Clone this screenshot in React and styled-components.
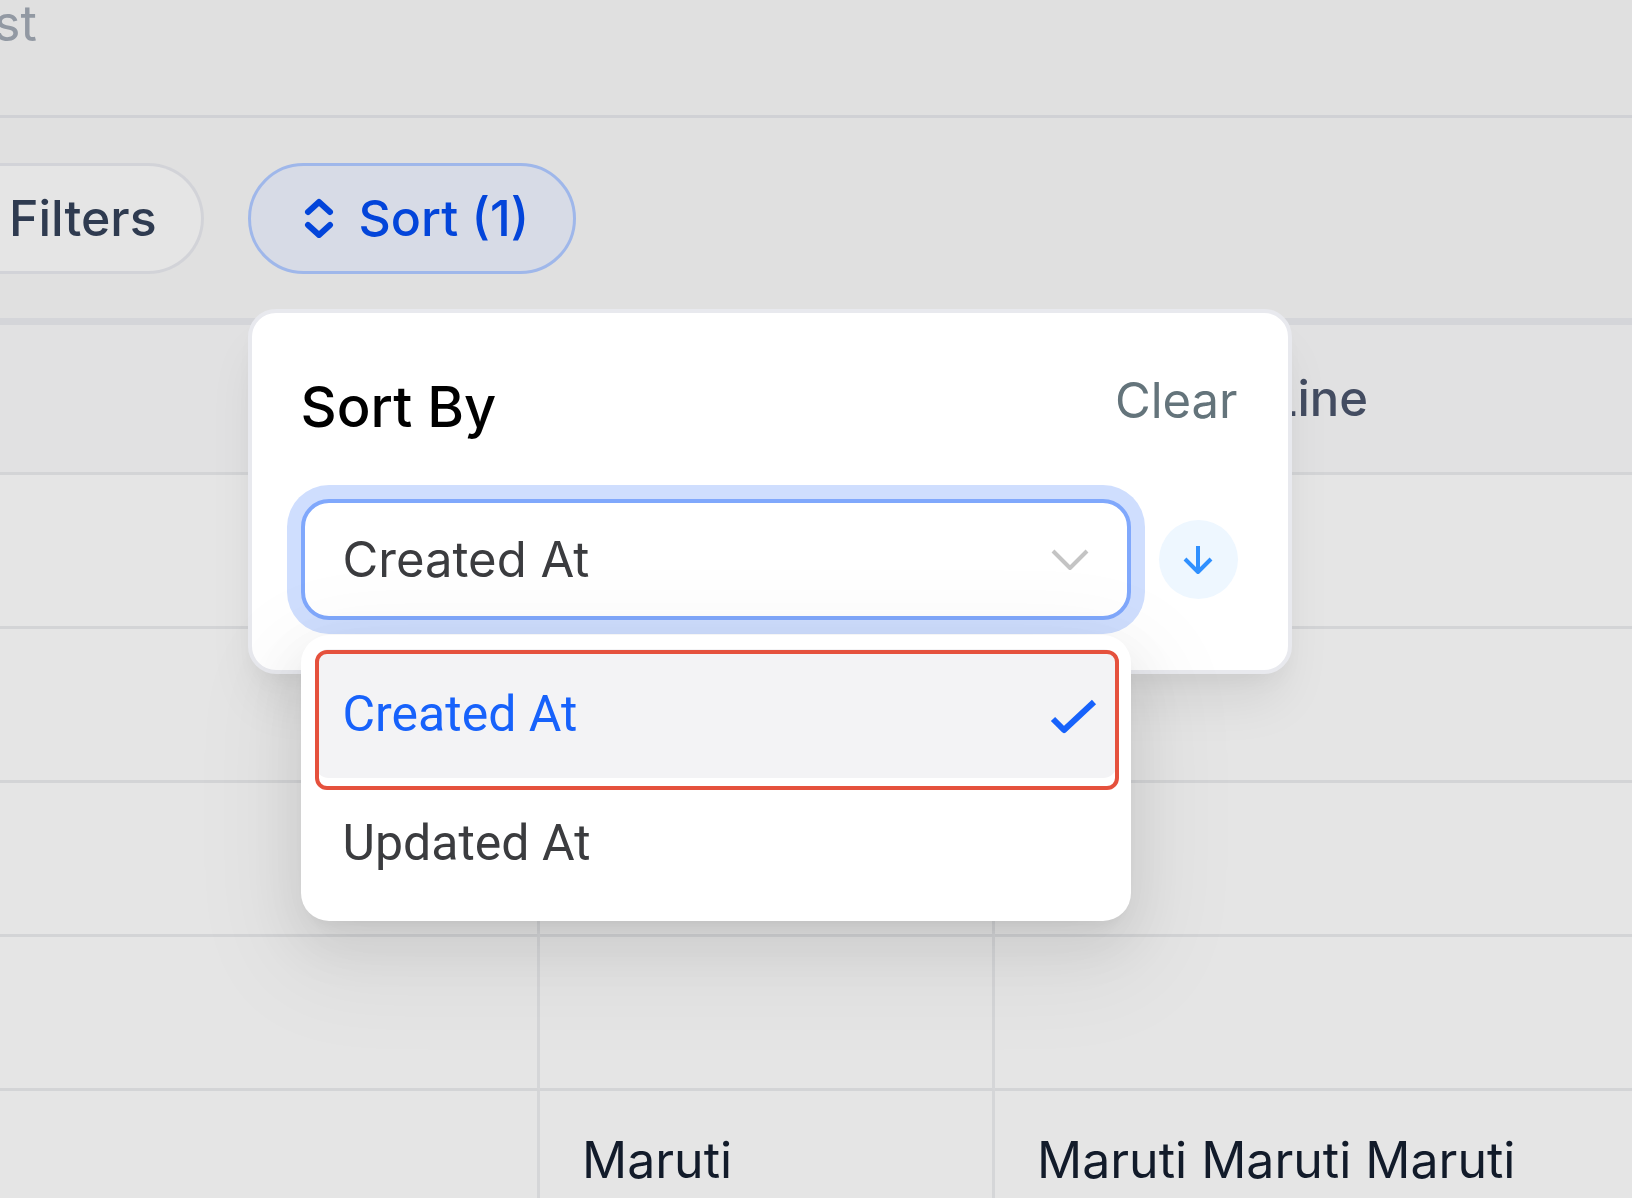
import React, { useState } from "react";
import styled, { createGlobalStyle, css } from "styled-components";

const GlobalStyle = createGlobalStyle`
  *, *::before, *::after { box-sizing: border-box; }
  body {
    margin: 0;
    background: #e0e0e0;
    font-family: Inter, "Liberation Sans", sans-serif;
    font-size: 50px;
    line-height: 70px;
  }
  button, select { font: inherit; }
`;

const Page = styled.div`
  display: flex;
  flex-direction: column;
  height: 100vh;
  overflow: hidden;
`;

const TopBar = styled.header`
  height: 118px;
  flex: none;
  border-bottom: 3px solid #d0d1d5;
  color: #9299a3;
`;

const TopText = styled.p`
  margin: -12px 0 0 -6px;
`;

const Toolbar = styled.div`
  display: flex;
  flex: none;
  gap: 44px;
  padding: 45px 0 44px;
  border-bottom: 7px solid #d4d5d9;
`;

const PillButton = styled.button`
  display: flex;
  align-items: center;
  height: 111px;
  border: 3px solid #d2d3d8;
  border-radius: 56px;
  padding: 0 44px 2px 48px;
  background: #e5e5e5;
  color: #2f3b50;
  font-weight: 500;
  white-space: nowrap;
  ${(p) =>
    p.$clipped &&
    css`
      border-left: 0;
      border-radius: 0 56px 56px 0;
      padding: 0 44px 2px 9px;
    `}
  ${(p) =>
    p.$active &&
    css`
      gap: 20px;
      border-color: #9fb7ea;
      background: #d7dbe6;
      color: #0345da;
    `}
`;

const SortAnchor = styled.div`
  position: relative;
`;

const Popover = styled.section`
  position: absolute;
  top: 146px;
  left: 0;
  z-index: 2;
  width: 1044px;
  height: 365px;
  padding: 49px 50px 0 49px;
  border: 4px solid #e8e9ee;
  border-radius: 28px;
  background: #fff;
  font-size: 49px;
  box-shadow: 0 35px 52px -10px rgba(0, 0, 0, 0.08), 0 14px 21px -7px rgba(0, 0, 0, 0.04);
`;

const PopoverHead = styled.div`
  display: flex;
  justify-content: space-between;
  align-items: flex-start;
  height: 137px;
`;

const Title = styled.h2`
  margin: 0;
  padding-top: 10px;
  color: #000;
  font-size: 56px;
  font-weight: 500;
`;

const ClearButton = styled.button`
  border: 0;
  padding: 4px 0 0;
  background: none;
  color: #64747b;
`;

const FieldRow = styled.div`
  display: flex;
  align-items: center;
  gap: 28px;
`;

const Field = styled.div`
  position: relative;
  flex: 1;
  display: flex;
  align-items: center;
`;

const Select = styled.select`
  appearance: none;
  width: 100%;
  height: 121px;
  margin: 0;
  padding: 0 96px 0 38px;
  border: 4px solid #80a8fc;
  border-radius: 28px;
  outline: none;
  background: #fff;
  box-shadow: 0 0 0 14px #cfdefe;
  color: #3b3c3f;
`;

const FieldIcon = styled.span`
  position: absolute;
  right: 41px;
  display: flex;
  pointer-events: none;
`;

const DirectionButton = styled.button`
  display: flex;
  align-items: center;
  justify-content: center;
  flex: none;
  width: 79px;
  height: 79px;
  border: 0;
  border-radius: 50%;
  padding: 0;
  background: #eef7ff;
`;

const Menu = styled.ul`
  position: absolute;
  top: 136px;
  left: 0;
  right: 0;
  z-index: 3;
  margin: 0;
  padding: 14px;
  list-style: none;
  border-radius: 28px;
  background: #fff;
  box-shadow: 0 21px 56px rgba(0, 0, 0, 0.08), 0 10px 21px -14px rgba(0, 0, 0, 0.12),
    0 32px 98px 28px rgba(0, 0, 0, 0.05);
`;

const MenuItem = styled.li`
  position: relative;
`;

const OptionButton = styled.button`
  display: flex;
  align-items: center;
  justify-content: space-between;
  width: 100%;
  height: 129px;
  border: 0;
  border-radius: 14px;
  padding: 0 20px 0 28px;
  background: ${(p) => (p.$selected ? "#f3f3f5" : "transparent")};
  color: ${(p) => (p.$selected ? "#1762fb" : "#3b3c3f")};
  font-family: Roboto, "Liberation Sans", sans-serif;
  font-size: 50px;
`;

const Highlight = styled.span`
  position: absolute;
  inset: 1px -2px -12px 0;
  border: 4px solid #e5513d;
  border-radius: 12px;
  pointer-events: none;
`;

const Table = styled.table`
  width: 100%;
  table-layout: fixed;
  border-collapse: separate;
  border-spacing: 0;
`;

const cell = css`
  border-right: 3px solid #d5d6d8;
  border-bottom: 3px solid #d3d4d6;
  padding: 0 42px;
  text-align: left;
  white-space: nowrap;
  &:last-child { border-right: 0; }
`;

const HeadCell = styled.th`
  ${cell}
  height: 150px;
  background: #e1e1e2;
  color: #434c61;
  font-size: 49px;
  font-weight: 500;
`;

const HeadLabel = styled.span`
  display: block;
  width: 331px;
  text-align: right;
`;

const Cell = styled.td`
  ${cell}
  height: 154px;
  padding-top: 34px;
  vertical-align: top;
  background: #e5e5e5;
  color: #121b2a;
`;

const Icon = ({ width, height, stroke, color, points, cap = "butt" }) => (
  <svg width={width} height={height} viewBox={`0 0 ${width} ${height}`} fill="none" aria-hidden="true">
    {points.map((p) => (
      <polyline key={p} points={p} stroke={color} strokeWidth={stroke} strokeLinecap={cap} strokeLinejoin="round" />
    ))}
  </svg>
);

const rows = [
  ["", "", ""],
  ["", "", ""],
  ["", "", ""],
  ["", "", ""],
  ["", "Maruti", "Maruti Maruti Maruti"],
];

const options = ["Created At", "Updated At"];

export default function App() {
  const [value, setValue] = useState(options[0]);

  return (
    <>
      <GlobalStyle />
      <Page>
        <TopBar>
          <TopText>st</TopText>
        </TopBar>
        <Toolbar>
          <PillButton type="button" $clipped>Filters</PillButton>
          <SortAnchor>
            <PillButton type="button" $active aria-expanded="true">
              <Icon
                width={40}
                height={40}
                stroke={6}
                cap="round"
                color="currentColor"
                points={["9,14 20,4 31,14", "9,27 20,37 31,27"]}
              />
              Sort (1)
            </PillButton>
            <Popover aria-label="Sort By">
              <PopoverHead>
                <Title id="sort-title">Sort By</Title>
                <ClearButton type="button">Clear</ClearButton>
              </PopoverHead>
              <FieldRow>
                <Field>
                  <Select aria-labelledby="sort-title" value={value} onChange={(e) => setValue(e.target.value)}>
                    {options.map((o) => (
                      <option key={o}>{o}</option>
                    ))}
                  </Select>
                  <FieldIcon>
                    <Icon width={40} height={24} stroke={4} color="#c4c4c4" points={["3,3 20,20 37,3"]} />
                  </FieldIcon>
                  <Menu>
                    {options.map((o) => (
                      <MenuItem key={o}>
                        <OptionButton type="button" $selected={o === value} onClick={() => setValue(o)}>
                          {o}
                          {o === value && (
                            <Icon width={48} height={42} stroke={6} color="#1762fb" points={["4,26 15,37 45,9"]} />
                          )}
                        </OptionButton>
                        {o === value && <Highlight />}
                      </MenuItem>
                    ))}
                  </Menu>
                </Field>
                <DirectionButton type="button" aria-label="Sort descending">
                  <Icon
                    width={32}
                    height={32}
                    stroke={4}
                    color="#2f90ff"
                    points={["16,2 16,28", "3,15 16,28 29,15"]}
                  />
                </DirectionButton>
              </FieldRow>
            </Popover>
          </SortAnchor>
        </Toolbar>
        <Table>
          <colgroup>
            <col width="540" />
            <col width="455" />
            <col />
          </colgroup>
          <thead>
            <tr>
              <HeadCell />
              <HeadCell />
              <HeadCell>
                <HeadLabel>Line</HeadLabel>
              </HeadCell>
            </tr>
          </thead>
          <tbody>
            {rows.map((row, i) => (
              <tr key={i}>
                {row.map((text, j) => (
                  <Cell key={j}>{text}</Cell>
                ))}
              </tr>
            ))}
          </tbody>
        </Table>
      </Page>
    </>
  );
}
